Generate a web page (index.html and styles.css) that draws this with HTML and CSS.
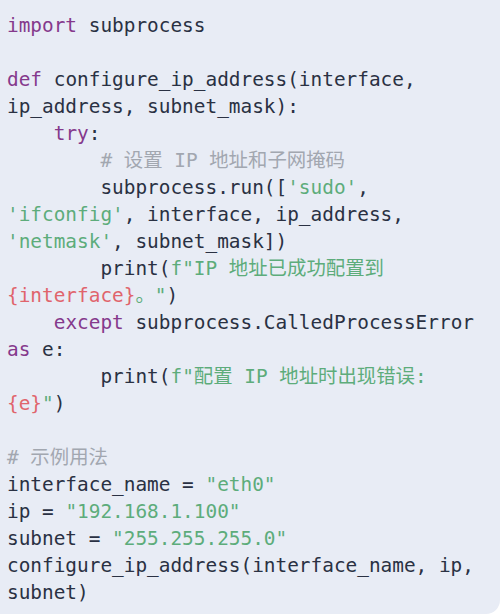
FILE: index.html
```html
<!DOCTYPE html>
<html>
<head>
<meta charset="utf-8">
<link rel="stylesheet" href="styles.css">
</head>
<body>
<div class="code"><pre><span class="kw">import</span> subprocess

<span class="kw">def</span> configure_ip_address(interface,
ip_address, subnet_mask):
    <span class="kw">try</span>:
        <span class="cm"># 设置 IP 地址和子网掩码</span>
        subprocess.run([<span class="st">'sudo'</span>,
<span class="st">'ifconfig'</span>, interface, ip_address,
<span class="st">'netmask'</span>, subnet_mask])
        print(<span class="st">f"IP 地址已成功配置到</span>
<span class="in">{interface}</span><span class="st">。"</span>)
    <span class="kw">except</span> subprocess.CalledProcessError
<span class="kw">as</span> e:
        print(<span class="st">f"配置 IP 地址时出现错误:</span>
<span class="in">{e}</span><span class="st">"</span>)

<span class="cm"># 示例用法</span>
interface_name = <span class="st">"eth0"</span>
ip = <span class="st">"192.168.1.100"</span>
subnet = <span class="st">"255.255.255.0"</span>
configure_ip_address(interface_name, ip,
subnet)</pre></div>
</body>
</html>
```
FILE: styles.css
```css
html, body {
  margin: 0;
  padding: 0;
  background: #ffffff;
}
.code {
  width: 500px;
  height: 614px;
  box-sizing: border-box;
  background: #e8ecf5;
  border-bottom-right-radius: 14px;
  padding: 12px 0 0 7px;
  overflow: hidden;
}
.code pre {
  margin: 0;
  font-family: "DejaVu Sans Mono", "Noto Sans CJK SC", monospace;
  font-size: 19.4px;
  line-height: 27px;
  color: #2a3143;
  white-space: pre;
}
.kw { color: #85398c; }
.st { color: #5dac7b; }
.cm { color: #a2a7b0; }
.in { color: #e0646c; }
```
